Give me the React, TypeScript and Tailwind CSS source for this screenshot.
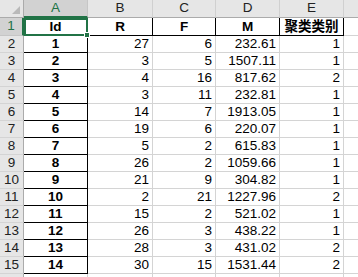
const rows = [
  ['1', '27', '6', '232.61', '1'],
  ['2', '3', '5', '1507.11', '1'],
  ['3', '4', '16', '817.62', '2'],
  ['4', '3', '11', '232.81', '1'],
  ['5', '14', '7', '1913.05', '1'],
  ['6', '19', '6', '220.07', '1'],
  ['7', '5', '2', '615.83', '1'],
  ['8', '26', '2', '1059.66', '1'],
  ['9', '21', '9', '304.82', '1'],
  ['10', '2', '21', '1227.96', '2'],
  ['11', '15', '2', '521.02', '1'],
  ['12', '26', '3', '438.22', '1'],
  ['13', '28', '3', '431.02', '2'],
  ['14', '30', '15', '1531.44', '2'],
];

const colWidths = ['w-[64px]', 'w-[65px]', 'w-[63px]', 'w-[64px]', 'w-[64px]'];
const letters = ['A', 'B', 'C', 'D', 'E'];
const titles = ['Id', 'R', 'F', 'M', '聚类类别'];

export default function App() {
  return (
    <div className="relative h-[277px] w-[358px] overflow-hidden bg-white font-['Liberation_Sans','Noto_Sans_CJK_SC',sans-serif] text-[13.5px] text-black">
      {/* column letters */}
      <div className="flex h-[18px]">
        <div className="relative w-[24px] shrink-0 border-r border-b border-[#ababab] bg-[#e6e6e6]">
          <svg className="absolute right-[3px] bottom-[3px]" width="8" height="8">
            <polygon points="8,0 8,8 0,8" fill="#b9b9b9" />
          </svg>
        </div>
        {letters.map((l, i) =>
          i === 0 ? (
            <div
              key={l}
              className={`${colWidths[i]} flex shrink-0 items-center justify-center border-r border-b-2 border-r-[#c6c6c6] border-b-[#217346] bg-[#d2d2d2] text-[13.5px] text-[#217346]`}
            >
              {l}
            </div>
          ) : (
            <div
              key={l}
              className={`${colWidths[i]} flex shrink-0 items-center justify-center border-r border-b border-r-[#d0d0d0] border-b-[#ababab] bg-[#e6e6e6] text-[13.5px] text-[#222]`}
            >
              {l}
            </div>
          )
        )}
        <div className="flex-1 border-b border-[#ababab] bg-[#e6e6e6]" />
      </div>

      {/* row 1: table titles */}
      <div className="flex h-[18px]">
        <div className="flex w-[24px] shrink-0 items-center justify-center border-r-2 border-b border-r-[#217346] border-b-[#c6c6c6] bg-[#d2d2d2] text-[13.5px] text-[#217346]">
          1
        </div>
        {titles.map((t, i) => (
          <div
            key={t}
            className={`${colWidths[i]} flex shrink-0 items-center justify-center border-r border-b border-black font-bold leading-none`}
          >
            {t}
          </div>
        ))}
        <div className="flex-1 border-b border-[#d4d4d4]" />
      </div>

      {/* data rows */}
      {rows.map((r, ri) => (
        <div key={ri} className="flex h-[17px]">
          <div className="flex w-[24px] shrink-0 items-center justify-center border-r border-b border-r-[#ababab] border-b-[#d4d4d4] bg-[#e6e6e6] text-[13.5px] text-[#222]">
            {ri + 2}
          </div>
          {r.map((v, ci) =>
            ci === 0 ? (
              <div
                key={ci}
                className={`${colWidths[ci]} flex shrink-0 items-center justify-center border-r border-b border-black font-bold leading-none`}
              >
                {v}
              </div>
            ) : (
              <div
                key={ci}
                className={`${colWidths[ci]} flex shrink-0 items-center justify-end border-r border-b border-[#d4d4d4] pr-[3px] leading-none`}
              >
                {v}
              </div>
            )
          )}
          <div className="flex-1 border-b border-[#d4d4d4]" />
        </div>
      ))}

      {/* next row, cut off by the window */}
      <div className="flex h-[17px]">
        <div className="w-[24px] shrink-0 border-r border-[#ababab] bg-[#e6e6e6]" />
        <div className="w-[64px] shrink-0 border-r border-[#d4d4d4]" />
        <div className="w-[65px] shrink-0 border-r border-[#d4d4d4]" />
        <div className="w-[63px] shrink-0 border-r border-[#d4d4d4]" />
        <div className="w-[64px] shrink-0 border-r border-[#d4d4d4]" />
        <div className="w-[64px] shrink-0 border-r border-[#d4d4d4]" />
      </div>

      {/* selection on A1 */}
      <div className="absolute top-[18px] left-[24px] h-[18px] w-[64px] border-2 border-[#217346]" />
      <div className="absolute top-[32px] left-[84px] h-[6px] w-[6px] border border-white bg-[#217346]" />
    </div>
  );
}
